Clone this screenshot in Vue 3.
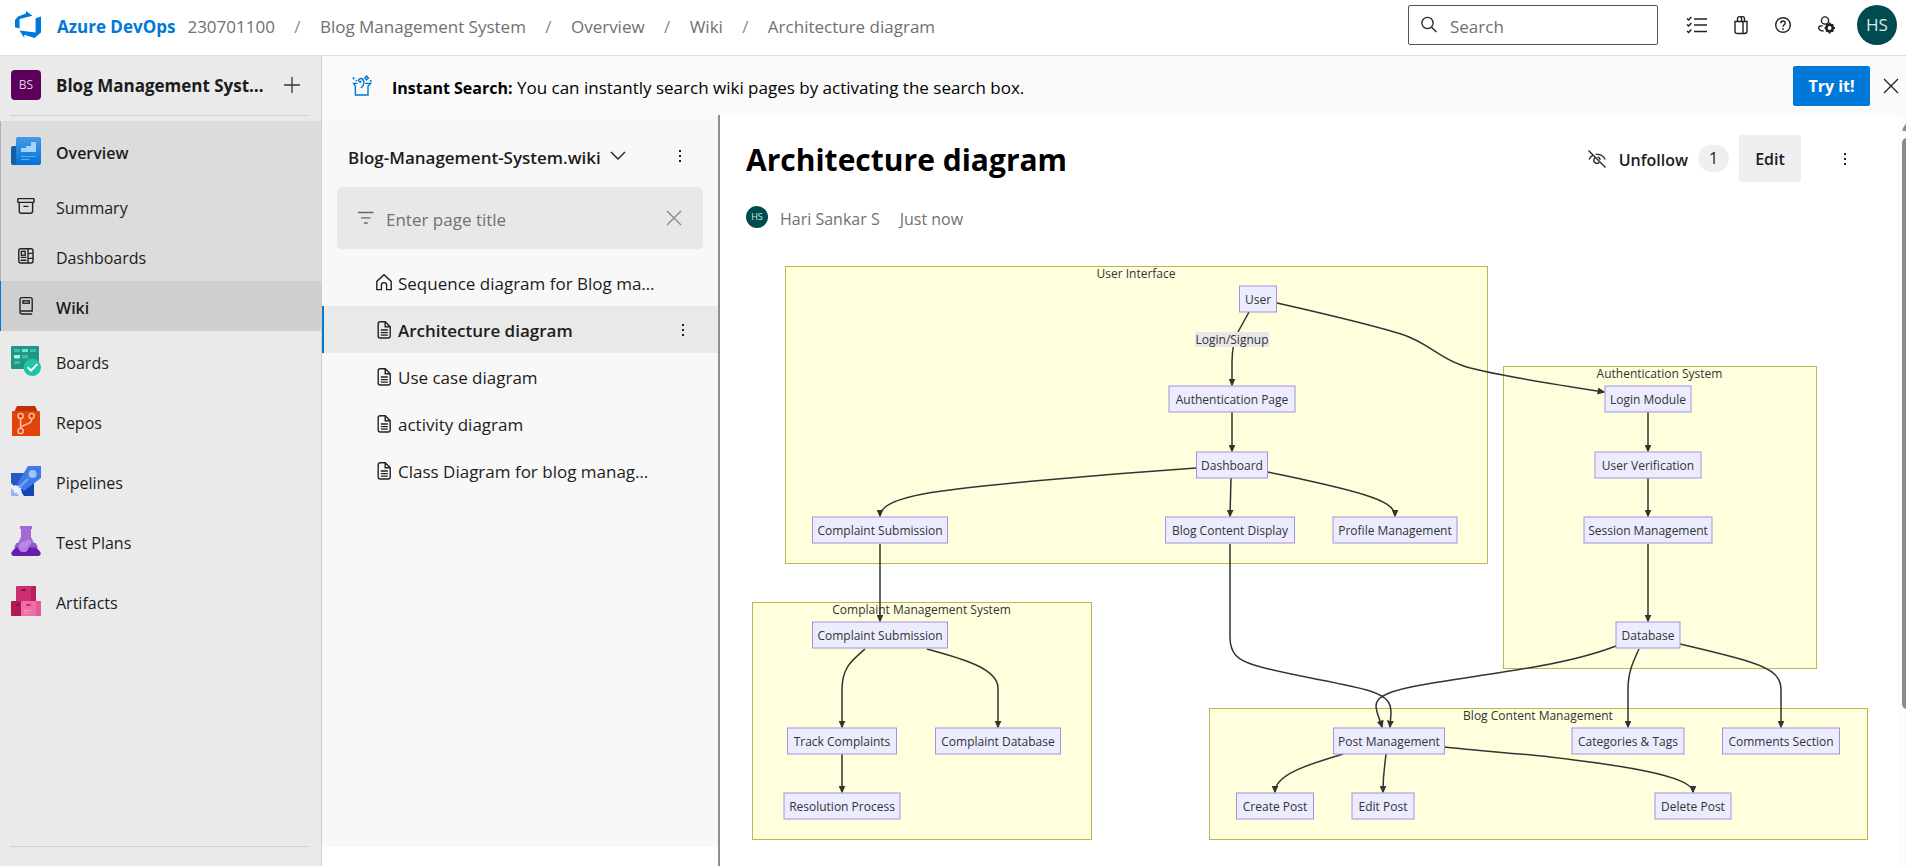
<script setup>
import { ref } from 'vue'

const crumbs = ['230701100', 'Blog Management System', 'Overview', 'Wiki', 'Architecture diagram']

const overviewItems = [
  { name: 'Summary', icon: 'summary' },
  { name: 'Dashboards', icon: 'dashboards' },
  { name: 'Wiki', icon: 'wiki', active: true },
]

const hubs = ['Boards', 'Repos', 'Pipelines', 'Test Plans', 'Artifacts']

const pages = [
  { title: 'Sequence diagram for Blog ma…', home: true },
  { title: 'Architecture diagram', active: true },
  { title: 'Use case diagram' },
  { title: 'activity diagram' },
  { title: 'Class Diagram for blog manag…' },
]

const search = ref('')
const filter = ref('')

const clusters = [
  { label: 'User Interface', x: 785, y: 266, w: 702, h: 297 },
  { label: 'Authentication System', x: 1503, y: 366, w: 313, h: 302 },
  { label: 'Complaint Management System', x: 752, y: 602, w: 339, h: 237 },
  { label: 'Blog Content Management', x: 1209, y: 708, w: 658, h: 131 },
]

const nodes = [
  { label: 'User', x: 1258, y: 299, w: 37 },
  { label: 'Authentication Page', x: 1232, y: 399, w: 126 },
  { label: 'Dashboard', x: 1232, y: 465, w: 71 },
  { label: 'Complaint Submission', x: 880, y: 530, w: 135 },
  { label: 'Blog Content Display', x: 1230, y: 530, w: 129 },
  { label: 'Profile Management', x: 1395, y: 530, w: 124 },
  { label: 'Login Module', x: 1648, y: 399, w: 86 },
  { label: 'User Verification', x: 1648, y: 465, w: 106 },
  { label: 'Session Management', x: 1648, y: 530, w: 128 },
  { label: 'Database', x: 1648, y: 635, w: 64 },
  { label: 'Complaint Submission', x: 880, y: 635, w: 135 },
  { label: 'Track Complaints', x: 842, y: 741, w: 109 },
  { label: 'Complaint Database', x: 998, y: 741, w: 125 },
  { label: 'Resolution Process', x: 842, y: 806, w: 116 },
  { label: 'Post Management', x: 1389, y: 741, w: 111 },
  { label: 'Categories & Tags', x: 1628, y: 741, w: 112 },
  { label: 'Comments Section', x: 1781, y: 741, w: 117 },
  { label: 'Create Post', x: 1275, y: 806, w: 77 },
  { label: 'Edit Post', x: 1383, y: 806, w: 62 },
  { label: 'Delete Post', x: 1693, y: 806, w: 76 },
]

const edges = [
  'M1249,312 L1238,332 C1234,340 1232,350 1232,362 V385',
  'M1277,303 C1330,315 1375,326 1401,334 C1427,342 1438,357 1461,365 C1482,373 1545,383 1604,392',
  'M1232,412 V451',
  'M1196,468 C1140,472 1090,476 1034,481 C950,489 880,495 880,516',
  'M1231,478 L1230,516',
  'M1268,472 C1310,481 1340,487 1365,495 C1384,501 1395,507 1395,516',
  'M1648,412 V451',
  'M1648,478 V516',
  'M1648,544 V621',
  'M880,544 V621',
  'M865,649 C851,661 842,668 842,690 V727',
  'M927,649 C960,658 998,668 998,688 V727',
  'M842,754 V792',
  'M1230,544 V637 C1230,654 1238,660 1254,665 C1285,675 1345,683 1370,691 C1388,697 1391,703 1391,713 L1390,727',
  'M1616,646 C1590,656 1560,663 1522,669 C1480,676 1440,681 1411,687 C1382,693 1376,699 1376,706 C1376,712 1380,720 1382,727',
  'M1639,649 C1632,664 1628,673 1628,690 V727',
  'M1680,644 C1710,651 1735,657 1750,662 C1775,670 1781,678 1781,690 V727',
  'M1343,754 C1310,764 1275,774 1275,792',
  'M1386,754 C1385,765 1383,772 1383,792',
  'M1444,747 C1480,751 1515,753 1550,757 C1610,764 1693,775 1693,792',
]
</script>

<template>
  <div class="app">
    <header class="topbar">
      <a href="#" class="brand">
        <svg width="28" height="28" viewBox="0 0 28 28" aria-hidden="true">
          <path fill="#0078d7" d="M1 9 L4 5.6 L12 2.6 V0 L18.5 4.8 L5.6 8 V17.5 L1 16.2 Z" />
          <path fill="#0078d7" d="M27 5.6 V21.4 L20.5 27 L10.3 23.8 V27 L5.6 19.6 L21.6 21.6 V7.2 Z" />
        </svg>
        <span class="label">Azure DevOps</span>
      </a>
      <nav class="crumbs" aria-label="Breadcrumb">
        <template v-for="(c, i) in crumbs" :key="c">
          <span v-if="i" class="slash label">/</span>
          <a href="#" class="label">{{ c }}</a>
        </template>
      </nav>
      <label class="search">
        <svg width="18" height="18" viewBox="0 0 18 18" fill="none" stroke="#222" stroke-width="1.3" aria-hidden="true">
          <circle cx="7.5" cy="7" r="5.6" /><path d="M11.6 11.2 L16.5 16" />
        </svg>
        <input v-model="search" type="text" placeholder="Search" aria-label="Search" />
      </label>
      <div class="tools">
        <button type="button" aria-label="Work items">
          <svg width="22" height="20" viewBox="0 0 22 20" fill="none" stroke="#222" stroke-width="1.4">
            <path d="M8 4 H21 M8 10 H21 M8 16.5 H21" />
            <path stroke-width="1.5" d="M1 3.5 L2.6 5 L5.4 2 M1 9.5 L2.6 11 L5.4 8 M1 16 L2.6 17.5 L5.4 14.5" />
          </svg>
        </button>
        <button type="button" aria-label="Marketplace">
          <svg width="16" height="20" viewBox="0 0 16 20" fill="none" stroke="#222" stroke-width="1.4">
            <path d="M2 6.5 H14 V16 Q14 18.5 11.5 18.5 H4.5 Q2 18.5 2 16 Z M10 6.5 V18.5" />
            <path d="M4.5 6.5 V4 Q4.5 1.6 6.7 1.6 Q8.6 1.6 8.6 4 V6.5 M8 1.8 Q11.5 1 11.5 4 V6.5" />
          </svg>
        </button>
        <button type="button" aria-label="Help">
          <svg width="18" height="18" viewBox="0 0 18 18" fill="none" stroke="#222" stroke-width="1.4">
            <circle cx="9" cy="9" r="7.3" />
            <path d="M6.8 7.2 Q6.9 5 9 5 Q11.2 5 11.2 7 Q11.2 8.2 9.9 9 Q9 9.6 9 10.8" />
            <circle cx="9" cy="12.9" r=".9" fill="#222" stroke="none" />
          </svg>
        </button>
        <button type="button" aria-label="User settings">
          <svg width="20" height="20" viewBox="0 0 20 20" fill="none" stroke="#222" stroke-width="1.4">
            <circle cx="8" cy="5.5" r="3.6" />
            <path d="M6.6 16 C2.6 15.8 1.4 14 1.8 12.2 Q2.2 10.8 5.6 10.8" />
            <circle cx="12.6" cy="13" r="3.2" stroke-width="2.6" />
            <path stroke-width="2" d="M12.6 7.6 V9.4 M12.6 16.6 V18.4 M7.6 13 H9 M16.4 13 H18 M9.2 9.4 L10.3 10.6 M15 15.4 L16.2 16.6 M16.2 9.4 L15 10.6 M9.2 16.6 L10.3 15.4" />
          </svg>
        </button>
        <button type="button" class="avatar" aria-label="Account">HS</button>
      </div>
    </header>

    <div class="shell">
      <aside class="sidebar">
        <div class="project">
          <span class="tile">BS</span>
          <a href="#" class="project-name label">Blog Management Syst…</a>
          <button type="button" aria-label="New">
            <svg width="18" height="18" viewBox="0 0 18 18" stroke="#333" stroke-width="1.3"><path d="M9 1 V17 M1 9 H17" /></svg>
          </button>
        </div>
        <nav class="hubs">
          <div class="group">
            <a href="#" class="hub strong">
              <svg width="30" height="30" viewBox="0 0 30 30" aria-hidden="true">
                <defs>
                  <linearGradient id="ov" x1="0" y1="0" x2="0" y2="1"><stop offset="0" stop-color="#4799e4" /><stop offset="1" stop-color="#0073d6" /></linearGradient>
                </defs>
                <path fill="#0f60a8" d="M2 10 H8 V29 H2 Q0 29 0 27 V12 Q0 10 2 10 Z" />
                <path fill="url(#ov)" d="M7 1 H28 Q30 1 30 3 V27 Q30 29 28 29 H4 Q5 28 5 27 V3 Q5 1 7 1 Z" />
                <path fill="#a5d3fb" d="M10 12 H15 V10 H20 V6 H25 V16 H10 Z" />
                <path stroke="#5eaef3" d="M10 20.5 H25 M10 23.5 H18" />
              </svg>
              <span class="label">Overview</span>
            </a>
            <a v-for="item in overviewItems" :key="item.name" href="#" class="sub" :class="{ active: item.active }">
              <svg width="20" height="20" viewBox="0 0 20 20" fill="none" stroke="#222" stroke-width="1.4" aria-hidden="true">
                <g v-if="item.icon === 'summary'">
                  <rect x="1.8" y="2.6" width="16.2" height="3.8" rx=".6" />
                  <path d="M3.2 6.4 V15 Q3.2 17.2 5.4 17.2 H14.4 Q16.6 17.2 16.6 15 V6.4 M7.4 10.4 H12.4" />
                </g>
                <g v-else-if="item.icon === 'dashboards'">
                  <rect x="2.8" y="2.8" width="14.2" height="14.2" rx="2" />
                  <path d="M12 2.8 V17 M12 7.4 H17 M12 12.4 H17 M4.6 11.4 H10.4 M4.6 14.2 H10.4" />
                  <rect x="5.4" y="5.4" width="3.8" height="3.8" />
                </g>
                <g v-else>
                  <path d="M16.2 18 H6.2 Q4 18 4 16 V3.4 Q4 1.6 6 1.6 H14.2 Q16.2 1.6 16.2 3.4 V15 H5" />
                  <rect x="7" y="4.8" width="6.2" height="2.4" />
                </g>
              </svg>
              <span class="label">{{ item.name }}</span>
            </a>
          </div>
          <a v-for="hub in hubs" :key="hub" href="#" class="hub">
            <svg width="30" height="30" viewBox="0 0 30 30" aria-hidden="true">
              <g v-if="hub === 'Boards'">
                <rect width="28" height="23" rx="1" fill="#239583" />
                <path fill="#37c2a8" d="M3 3 H9 V6 H3Z M19 3 H25 V6 H19Z M11 9 H17 V12.5 H11Z M3 15 H9 V18 H3Z" />
                <path fill="#6ee3cc" d="M11 3 H17 V6 H11Z" />
                <path fill="#9dfbe6" d="M3 9 H9 V12.5 H3Z" />
                <circle cx="21.3" cy="21.3" r="8.7" fill="#1fc4a6" />
                <path fill="none" stroke="#fff" stroke-width="2" d="M16.8 21.2 L20 24.6 L26.4 18" />
              </g>
              <g v-else-if="hub === 'Repos'">
                <path fill="#b93303" d="M6 0 H24 L26 4 V7 H4 V4 Z" />
                <rect x="1" y="5" width="28" height="25" rx="1" fill="#e04409" />
                <path fill="none" stroke="#ffb597" stroke-width="1.7" d="M9.6 12.8 V22 M20.6 12.8 V14 Q20.6 16 18 17.2 L12 19.8 Q9.6 21 9.6 22" />
                <g fill="#e04409" stroke="#ffc7b0" stroke-width="1.4"><circle cx="9.6" cy="10" r="2.6" /><circle cx="20.6" cy="10" r="2.6" /><circle cx="9.6" cy="25" r="2.6" /></g>
              </g>
              <g v-else-if="hub === 'Pipelines'">
                <path fill="#2459c5" d="M0 7 H15 L8 19 L4 21 L0 17 Z" />
                <path fill="#1444b5" d="M23 14 V30 H13 L9 24 Z" />
                <path fill="#4079ea" d="M17 0 H30 V12 L13 25 L6 18 Z" />
                <path stroke="#7aa5f6" stroke-width="2" d="M7.5 22 L17 13" />
                <circle cx="21.6" cy="8" r="4" fill="#a2c2fb" />
                <path fill="#eaf1ff" d="M0 21 L5 19 L11 25 L9 29 L6 26 L3 24 Z" />
                <path fill="#95b4f3" d="M0 22 L3 25 V27 H6 L8 30 H0 Z" />
              </g>
              <g v-else-if="hub === 'Test Plans'">
                <path fill="#a06ad2" d="M9 0 H21 V3 H20 V11 L25 21 H5 L10 11 V3 H9 Z" />
                <path fill="#6420ab" d="M5 21 H25 L29.4 26 Q30.4 30 27 30 H3 Q-.4 30 .6 26 Z" />
                <path fill="#9358cb" d="M5.4 17 H24.6 L27 21.5 H3 Z" />
                <circle cx="12.5" cy="21" r="5.2" fill="#c08eef" opacity=".85" />
                <circle cx="17.3" cy="16.8" r="3" fill="#bd90ea" opacity=".8" />
              </g>
              <g v-else>
                <rect x="5" width="20" height="16" rx="1" fill="#cb3170" />
                <path fill="#b5235f" d="M20 0 H24 Q25 0 25 1 V15 H20Z" />
                <rect y="15" width="11" height="15" rx="1" fill="#b01957" />
                <rect x="10" y="15" width="20" height="15" rx="1" fill="#ef6ea6" />
                <path fill="#e65a96" d="M25 15 H29 Q30 15 30 16 V29 Q30 30 29 30 H25Z" />
                <g fill="#8c0f44"><rect x="10" y="3" width="5" height="2" rx="1" /><rect x="5" y="18" width="4" height="2" rx="1" /></g>
                <rect x="15" y="18" width="5" height="2" rx="1" fill="#c0306d" />
                <path stroke="#f79cc4" d="M12.5 24.5 H20 M12.5 27 H17" />
              </g>
            </svg>
            <span class="label">{{ hub }}</span>
          </a>
        </nav>
      </aside>

      <main class="main">
        <div class="banner">
          <svg width="22" height="22" viewBox="0 0 22 22" fill="none" stroke="#0078d4" stroke-width="1.4" aria-hidden="true">
            <path d="M6.6 8.4 H2.6 L4.4 11.2 V20 H17 V11.2 L19.6 8.4 H14" />
            <path d="M9.8 13 Q13.4 10.6 12.8 6.4 Q12 3 9 3.6 Q6.8 4.6 8.2 6.6 Q9.8 7.6 10.4 5.6" />
            <path d="M15.6 1 L17.4 3 L15.6 5 L13.9 3 Z" />
            <g fill="#0078d4" stroke="none"><circle cx="2.6" cy="3.4" r="1.1" /><circle cx="19.6" cy="6" r="1" /><circle cx="5.4" cy="5.6" r=".9" /></g>
          </svg>
          <p><b>Instant Search:</b> You can instantly search wiki pages by activating the search box.</p>
          <button type="button" class="try">Try it!</button>
          <button type="button" class="dismiss" aria-label="Dismiss">
            <svg width="16" height="16" viewBox="0 0 16 16" stroke="#222" stroke-width="1.3"><path d="M1 1 L15 15 M15 1 L1 15" /></svg>
          </button>
        </div>

        <div class="split">
          <section class="tree">
            <div class="tree-inner">
              <div class="tree-head">
                <button type="button" class="picker">
                  <span class="label">Blog-Management-System.wiki</span>
                  <svg width="16" height="10" viewBox="0 0 16 10" fill="none" stroke="#222" stroke-width="1.4"><path d="M1 1 L8 8 L15 1" /></svg>
                </button>
                <button type="button" class="dots" aria-label="More options"><i></i><i></i><i></i></button>
              </div>
              <label class="filter">
                <svg width="16" height="14" viewBox="0 0 16 14" stroke="#666" stroke-width="1.3" aria-hidden="true"><path d="M0 1.5 H15.5 M3 6.8 H12.5 M6 12 H9.8" /></svg>
                <input v-model="filter" type="text" placeholder="Enter page title" aria-label="Enter page title" />
                <button type="button" aria-label="Clear filter">
                  <svg width="16" height="16" viewBox="0 0 16 16" stroke="#888" stroke-width="1.3"><path d="M1 1 L15 15 M15 1 L1 15" /></svg>
                </button>
              </label>
              <ul>
                <li v-for="p in pages" :key="p.title" :class="{ active: p.active }">
                  <a href="#">
                    <svg width="16" height="20" viewBox="0 0 16 20" fill="none" stroke="#222" stroke-width="1.4" aria-hidden="true">
                      <path v-if="p.home" d="M.8 16.6 V8.4 L8 1.8 L15.2 8.4 V16.6 H10.6 V12 Q10.6 9.6 8 9.6 Q5.4 9.6 5.4 12 V16.6 Z" />
                      <g v-else>
                        <path d="M9.2 1.8 H4.2 Q2.2 1.8 2.2 3.8 V16 Q2.2 18 4.2 18 H12.2 Q14.2 18 14.2 16 V6.8 Z V6.8 H14.2" />
                        <path stroke-width="1.3" d="M4.8 10 H11.8 M4.8 12.6 H11.8 M4.8 15.2 H11.8" />
                      </g>
                    </svg>
                    <span class="label">{{ p.title }}</span>
                  </a>
                  <button v-if="p.active" type="button" class="dots" aria-label="Page options"><i></i><i></i><i></i></button>
                </li>
              </ul>
            </div>
          </section>

          <article class="page">
            <div class="page-head">
              <h1>Architecture diagram</h1>
              <div class="actions">
                <button type="button" class="unfollow">
                  <svg width="20" height="20" viewBox="0 0 20 20" fill="none" stroke="#222" stroke-width="1.3" aria-hidden="true">
                    <path d="M1.5 1.5 L18.5 18.5 M2 10.5 Q3.4 7.4 6.4 6.2 M8.6 5.4 Q15.6 4.6 18.2 10.5 M8 8.6 Q6 10.6 7.2 13 Q9.6 15.6 12.2 13.4 M10.6 8 Q13 8.6 13.2 11" />
                  </svg>
                  <span class="label">Unfollow</span>
                </button>
                <span class="count">1</span>
                <button type="button" class="edit"><span class="label">Edit</span></button>
                <button type="button" class="dots" aria-label="More actions"><i></i><i></i><i></i></button>
              </div>
            </div>
            <div class="byline">
              <span class="mini">HS</span>
              <span class="label">Hari Sankar S</span>
              <span class="label when">Just now</span>
            </div>

            <svg class="diagram" viewBox="746 260 1128 590" role="img" aria-label="Architecture diagram">
              <defs>
                <marker id="arrow" viewBox="0 0 10 10" refX="8" refY="5" markerWidth="8" markerHeight="7" markerUnits="userSpaceOnUse" preserveAspectRatio="none" orient="auto">
                  <path d="M0 0 L10 5 L0 10 Z" fill="#333" />
                </marker>
              </defs>
              <g v-for="c in clusters" :key="c.label">
                <rect class="cluster" :x="c.x + .5" :y="c.y + .5" :width="c.w" :height="c.h" />
                <text :x="c.x + c.w / 2" :y="c.y + 12">{{ c.label }}</text>
              </g>
              <path v-for="d in edges" :key="d" class="edge" :d="d" marker-end="url(#arrow)" />
              <rect class="edge-label" x="1195" y="332" width="74" height="15" />
              <text x="1232" y="344">Login/Signup</text>
              <g v-for="(n, i) in nodes" :key="i">
                <rect class="node" :x="n.x - n.w / 2" :y="n.y - 13" :width="n.w" height="26" />
                <text :x="n.x" :y="n.y + 5">{{ n.label }}</text>
              </g>
            </svg>
          </article>

          <div class="scrollbar" aria-hidden="true">
            <svg width="10" height="10" viewBox="0 0 10 10"><path fill="#8b8b8b" d="M1 10 Q0 9 1 7 L5 1 Q6 0 7 0 H10 V10 Z" /></svg>
            <div class="thumb"></div>
          </div>
        </div>
      </main>
    </div>
  </div>
</template>

<style>
html, body, #app { height: 100%; }
body { margin: 0; overflow: hidden; }
</style>

<style scoped>
.app {
  height: 100%;
  display: flex;
  flex-direction: column;
  background: #fff;
  color: #1c1c1c;
  font: 17px/24px "Open Sans", "Noto Sans", sans-serif;
}
* { box-sizing: border-box; }
a { color: inherit; text-decoration: none; }
button { border: 0; padding: 0; margin: 0; background: none; font: inherit; color: inherit; cursor: pointer; }
svg { display: block; flex: none; }
.label { padding-top: 3px; white-space: nowrap; }

.topbar {
  flex: none;
  display: flex;
  align-items: center;
  height: 56px;
  padding: 0 9px 5px 14px;
  border-bottom: 1px solid #dfdfdf;
}
.brand { display: flex; align-items: center; gap: 15px; color: #0078d7; font-weight: 700; }
.crumbs { display: flex; margin-left: 12px; color: #707070; }
.slash { width: 45px; text-align: center; color: #8a8a8a; }
.search {
  display: flex;
  align-items: center;
  gap: 12px;
  width: 250px;
  height: 40px;
  margin-left: auto;
  padding: 0 11px;
  border: 1px solid #555;
  border-radius: 2px;
}
input { flex: 1; min-width: 0; border: 0; outline: 0; padding: 3px 0 0; background: none; font: inherit; color: inherit; }
input::placeholder { color: #707070; opacity: 1; }
.tools { display: flex; align-items: center; gap: 25px; margin-left: 28px; }
.avatar {
  width: 40px;
  height: 40px;
  margin-left: -5px;
  border-radius: 50%;
  background: #004b50;
  color: #dce8e8;
}

.shell { flex: 1; min-height: 0; display: flex; }
.sidebar {
  flex: none;
  width: 322px;
  display: flex;
  flex-direction: column;
  background: #eaeaea;
  border-right: 1px solid #cfcfcf;
}
.sidebar::after { content: ""; height: 1px; margin: auto 12px 19px 10px; background: #cfcfcf; }
.project {
  display: flex;
  align-items: center;
  height: 60px;
  margin: 0 12px 5px 10px;
  padding: 0 8px 2px 1px;
  border-bottom: 1px solid #cfcfcf;
  font-weight: 700;
}
.tile {
  width: 30px;
  height: 30px;
  border-radius: 4px;
  background: #5c005c;
  color: #e3cde3;
  font-size: 12px;
  font-weight: 400;
  line-height: 30px;
  text-align: center;
}
.project-name { flex: 1; margin-left: 15px; }
.hubs { font-size: 16px; }
.group { background: #dcdcdc; }
.hub, .sub { display: flex; align-items: center; gap: 15px; }
.hub { height: 60px; padding-left: 11px; }
.sub { height: 50px; gap: 20px; padding-left: 16px; }
.group > a { border-left: 1px solid #b0b0b0; }
.group .hub { padding-left: 10px; }
.group .sub { padding-left: 15px; }
.group > .active { background: #cfcfcf; border-left-color: #0078d4; border-radius: 0 4px 4px 0; }
.strong, .sub.active { font-weight: 600; }

.main { flex: 1; min-width: 0; display: flex; flex-direction: column; }
.banner { flex: none; display: flex; align-items: center; height: 59px; padding: 0 7px 0 29px; background: #fafafa; color: #000; }
.banner p { margin: 0 auto 0 19px; padding-top: 5px; }
.banner b { font-size: 16px; }
.try { width: 77px; height: 40px; border-radius: 2px; background: #0078d7; color: #fff; font-size: 16px; font-weight: 700; }
.dismiss { margin-left: 13px; }

.split { flex: 1; min-height: 0; display: flex; }
.tree { flex: none; width: 398px; padding-bottom: 19px; border-right: 2px solid #8f8f8f; }
.tree-inner { height: 100%; background: #f8f8f8; }
.tree-head { display: flex; align-items: center; justify-content: space-between; height: 72px; padding: 10px 37px 0 26px; }
.picker { display: flex; align-items: center; gap: 9px; font-weight: 600; }
.dots { display: flex; flex-direction: column; gap: 3px; padding: 8px 0; }
.dots i { width: 2px; height: 2px; background: #222; }
.filter {
  display: flex;
  align-items: center;
  gap: 12px;
  height: 62px;
  margin: 0 15px;
  padding: 0 21px;
  border-radius: 5px;
  background: #e8e8e8;
}
ul { list-style: none; margin: 10px 0 0; padding: 0; }
li { display: flex; align-items: center; height: 47px; padding: 0 34px 0 54px; }
li a { flex: 1; display: flex; align-items: center; gap: 6px; }
.active { font-weight: 600; }
li.active { background: #e9e9e9; box-shadow: inset 2px 0 #0078d4; }

.page { flex: 1; min-width: 0; padding: 20px 24px 0 26px; }
.page-head { display: flex; align-items: center; justify-content: space-between; height: 47px; }
h1 { margin: 0; padding-top: 3px; color: #000; font-size: 30px; line-height: 44px; font-weight: 700; }
.actions { display: flex; align-items: center; padding-right: 28px; font-weight: 600; }
.unfollow { display: flex; align-items: center; gap: 12px; }
.count { width: 31px; height: 27px; margin: 0 10px; border-radius: 14px; background: #efefef; font-weight: 400; font-size: 16px; line-height: 27px; text-align: center; }
.edit { width: 62px; height: 47px; border-radius: 2px; background: #efefef; }
.edit, .unfollow { font-size: 16px; }
.actions .dots { margin-left: 43px; }
.byline { display: flex; align-items: center; height: 24px; margin-top: 23px; color: #707070; font-size: 16px; }
.mini { width: 22px; height: 22px; margin-right: 12px; border-radius: 50%; background: #004b50; color: #dce8e8; font-size: 9px; line-height: 22px; text-align: center; }
.when { margin-left: 20px; }

.diagram { width: 100%; margin-top: 31px; }
.diagram text { fill: #333; font-size: 12px; text-anchor: middle; }
.cluster { fill: #ffffde; stroke: #b9b94e; }
.node { fill: #ececff; stroke: #a98ee0; }
.edge { fill: none; stroke: #333; stroke-width: 1.5; }
.edge-label { fill: #e8e8e8; }

.scrollbar { flex: none; width: 8px; padding-left: 4px; background: #fcfcfc; overflow: hidden; }
.scrollbar svg { margin-top: 6px; }
.thumb { width: 10px; height: 76%; margin-top: 7px; border-radius: 5px; background: #8b8b8b; }
</style>
